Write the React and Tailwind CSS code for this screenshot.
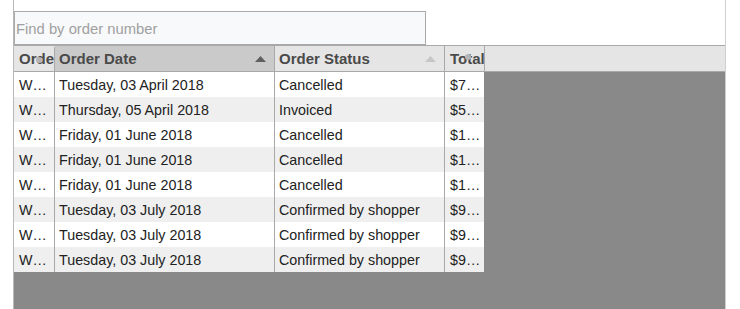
import React from "react";

const rows = [
  ["W…", "Tuesday, 03 April 2018", "Cancelled", "$7…"],
  ["W…", "Thursday, 05 April 2018", "Invoiced", "$5…"],
  ["W…", "Friday, 01 June 2018", "Cancelled", "$1…"],
  ["W…", "Friday, 01 June 2018", "Cancelled", "$1…"],
  ["W…", "Friday, 01 June 2018", "Cancelled", "$1…"],
  ["W…", "Tuesday, 03 July 2018", "Confirmed by shopper", "$9…"],
  ["W…", "Tuesday, 03 July 2018", "Confirmed by shopper", "$9…"],
  ["W…", "Tuesday, 03 July 2018", "Confirmed by shopper", "$9…"],
];

function Grip() {
  return (
    <svg width="8" height="8" viewBox="0 0 8 8" className="absolute">
      <circle cx="4" cy="4" r="3" fill="#b5b5b5" />
    </svg>
  );
}

export default function App() {
  return (
    <div className="w-[740px] h-[309px] bg-white overflow-hidden font-['Liberation_Sans',Arial,sans-serif]">
      <div className="ml-[13px] w-[713px] h-full border-l border-r border-l-[#b9b9b9] border-r-[#cfcfcf] flex flex-col">
        <div className="pt-[11px]">
          <input
            className="block w-[412px] h-[34px] border border-[#a9a9a9] bg-[#f8f9fb] pl-[1px] pt-[2px] text-[14.8px] text-[#333] outline-none placeholder:text-[#a0a0a0] font-['Liberation_Sans',Arial,sans-serif]"
            placeholder="Find by order number"
          />
        </div>
        <div className="flex-1 flex flex-col border-t border-[#a9a9a9] bg-[#898989]">
          <div className="flex h-[26px] bg-[#e5e5e5] border-b border-[#a9a9a9] text-[15px] font-bold text-[#4a4a4a] leading-[24px] pt-[1px]">
            <div className="relative w-[41px] border-r border-[#a9a9a9] pl-[5px] overflow-hidden whitespace-nowrap">
              <span>Orde</span>
              <span className="absolute left-[21px] top-[9px]"><Grip /></span>
            </div>
            <div className="w-[220px] border-r border-[#a9a9a9] bg-[#cacaca] -mt-[1px] pt-[1px] pl-[4px] flex items-center justify-between pr-[8px]">
              <span>Order Date</span>
              <svg width="11" height="6" viewBox="0 0 11 6"><polygon points="0,6 11,6 5.5,0" fill="#5f5f5f" /></svg>
            </div>
            <div className="w-[170px] border-r border-[#a9a9a9] -mt-[1px] pt-[1px] pl-[4px] flex items-center justify-between pr-[8px]">
              <span>Order Status</span>
              <svg width="11" height="6" viewBox="0 0 11 6"><polygon points="0,6 11,6 5.5,0" fill="#c6c6c6" /></svg>
            </div>
            <div className="relative w-[40px] border-r border-[#a9a9a9] -mt-[1px] pt-[1px] pl-[5px] overflow-hidden whitespace-nowrap">
              <span>Total</span>
              <span className="absolute left-[19px] top-[7px]"><Grip /></span>
            </div>
            <div className="flex-1" />
          </div>
          <div className="w-[470px] text-[14.3px] text-[#222]">
            {rows.map((r, i) => (
              <div key={i} className={`flex h-[25px] pt-[1px] leading-[24px] ${i % 2 ? "bg-[#efefef]" : "bg-white"}`}>
                <div className="w-[41px] border-r border-[#a9a9a9] -mt-[1px] pt-[1px] pl-[5px] whitespace-nowrap overflow-hidden">{r[0]}</div>
                <div className="w-[220px] border-r border-[#a9a9a9] -mt-[1px] pt-[1px] pl-[4px] whitespace-nowrap overflow-hidden">{r[1]}</div>
                <div className="w-[170px] border-r border-[#a9a9a9] -mt-[1px] pt-[1px] pl-[4px] whitespace-nowrap overflow-hidden">{r[2]}</div>
                <div className="w-[39px] pl-[5px] whitespace-nowrap overflow-hidden">{r[3]}</div>
              </div>
            ))}
          </div>
        </div>
      </div>
    </div>
  );
}
